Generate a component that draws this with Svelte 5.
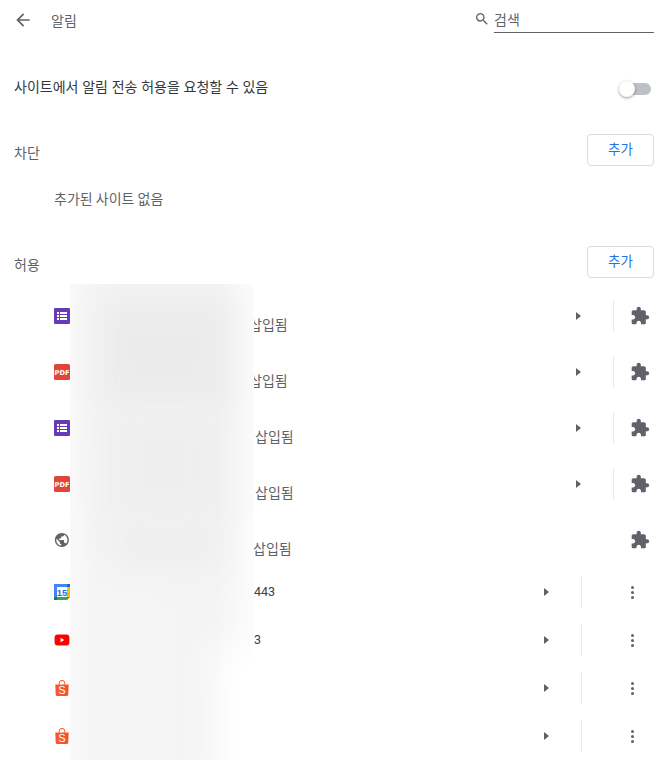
<script>
  const extRows = [
    { icon: 'forms', left: 249 },
    { icon: 'pdf', left: 249 },
    { icon: 'forms', left: 255 },
    { icon: 'pdf', left: 255 },
    { icon: 'globe', left: 253, plain: true },
  ];
  const siteRows = [
    { icon: 'calendar', text: '443' },
    { icon: 'youtube', text: '3' },
    { icon: 'shopee', text: '' },
    { icon: 'shopee', text: '' },
  ];
</script>

{#snippet favicon(name)}
  <svg class="favicon" viewBox="0 0 16 16" width="16" height="16">
    {#if name === 'forms'}
      <rect width="16" height="16" rx="1" fill="#673ab7" />
      <g fill="#fff">
        <rect x="3" y="4" width="2" height="2" /><rect x="6" y="4" width="7" height="2" />
        <rect x="3" y="7" width="2" height="2" /><rect x="6" y="7" width="7" height="2" />
        <rect x="3" y="10" width="2" height="2" /><rect x="6" y="10" width="7" height="2" />
      </g>
    {:else if name === 'pdf'}
      <rect width="16" height="16" rx="1.5" fill="#e2443a" />
      <text x="8" y="10.8" class="pdf">PDF</text>
    {:else if name === 'globe'}
      <g transform="translate(-0.5 -0.5) scale(0.7)">
        <path fill="#5f6368" d="M12 2C6.48 2 2 6.48 2 12s4.48 10 10 10 10-4.48 10-10S17.52 2 12 2zm-1 17.93c-3.95-.49-7-3.85-7-7.93 0-.62.08-1.21.21-1.79L9 15v1c0 1.1.9 2 2 2v1.93zm6.9-2.54c-.26-.81-1-1.39-1.9-1.39h-1v-3c0-.55-.45-1-1-1H8v-2h2c.55 0 1-.45 1-1V7h2c1.1 0 2-.9 2-2v-.41c2.93 1.19 5 4.06 5 7.41 0 2.08-.8 3.97-2.1 5.39z" />
      </g>
    {:else if name === 'calendar'}
      <rect width="16" height="16" fill="#fff" />
      <rect width="13" height="3" fill="#4285f4" />
      <rect width="3" height="13" fill="#4285f4" />
      <rect x="13" width="3" height="3" fill="#1967d2" />
      <rect x="13" y="3" width="3" height="10" fill="#fbbc04" />
      <rect y="13" width="13" height="3" fill="#34a853" />
      <rect y="13" width="3" height="3" fill="#188038" />
      <path d="M13 13h3l-3 3z" fill="#ea4335" />
      <text x="8" y="11.6" class="cal">15</text>
    {:else if name === 'youtube'}
      <rect x="0.6" y="2.4" width="14.8" height="11.2" rx="3" fill="#f00" />
      <path d="M6.5 5.8v4.4L10.3 8z" fill="#fff" />
    {:else if name === 'shopee'}
      <path d="M1.3 4.4h13.4l-.4 10.2q-.1 1.4-1.3 1.4H3q-1.2 0-1.3-1.4z" fill="#f5552d" />
      <path d="M5.2 4.5V3.2a2.8 2.8 0 0 1 5.6 0v1.3" fill="none" stroke="#f5552d" stroke-width="1" />
      <text x="8" y="14" class="bag">S</text>
    {/if}
  </svg>
{/snippet}

<div class="page">
  <header class="toolbar">
    <svg class="back" viewBox="0 0 24 24" width="20" height="20">
      <path d="M20 11H7.83l5.59-5.59L12 4l-8 8 8 8 1.41-1.41L7.83 13H20v-2z" />
    </svg>
    <h1>알림</h1>
    <svg class="search-icon" viewBox="0 0 24 24" width="16" height="16">
      <path d="M15.5 14h-.79l-.28-.27A6.471 6.471 0 0 0 16 9.5 6.5 6.5 0 1 0 9.5 16c1.61 0 3.09-.59 4.23-1.57l.27.28v.79l5 4.99L20.49 19l-4.99-5zm-6 0C7.01 14 5 11.99 5 9.5S7.01 5 9.5 5 14 7.01 14 9.5 11.99 14 9.5 14z" />
    </svg>
    <div class="search">검색</div>
  </header>

  <div class="ask">
    <span>사이트에서 알림 전송 허용을 요청할 수 있음</span>
    <div class="toggle"><div class="knob"></div></div>
  </div>

  <section class="block">
    <div class="section-head">
      <h2>차단</h2>
      <button>추가</button>
    </div>
    <p class="empty">추가된 사이트 없음</p>
  </section>

  <section class="allow">
    <div class="section-head">
      <h2>허용</h2>
      <button>추가</button>
    </div>

    <div class="list">
      {#each extRows as row}
        <div class="row ext">
          {@render favicon(row.icon)}
          <div class="name two-line" style="padding-left: {row.left - 70}px">삽입됨</div>
          {#if !row.plain}
            <span class="arrow"></span>
            <span class="sep"></span>
          {/if}
          <div class="action puzzle">
            <svg viewBox="0 0 24 24" width="20" height="20">
              <path d="M20.5 11H19V7c0-1.1-.9-2-2-2h-4V3.5C13 2.12 11.88 1 10.5 1S8 2.12 8 3.5V5H4c-1.1 0-1.99.9-1.99 2v3.8H3.5c1.49 0 2.7 1.21 2.7 2.7s-1.21 2.7-2.7 2.7H2V20c0 1.1.9 2 2 2h3.8v-1.5c0-1.49 1.21-2.7 2.7-2.7 1.49 0 2.7 1.21 2.7 2.7V22H17c1.1 0 2-.9 2-2v-4h1.5c1.38 0 2.5-1.12 2.5-2.5S21.88 11 20.5 11z" />
            </svg>
          </div>
        </div>
      {/each}

      {#each siteRows as row}
        <div class="row site">
          {@render favicon(row.icon)}
          <div class="name port">{row.text}</div>
          <span class="arrow"></span>
          <span class="sep"></span>
          <div class="action kebab"><i></i><i></i><i></i></div>
        </div>
      {/each}

      <div class="smudge">
        <div class="blob a"></div>
        <div class="blob b"></div>
        <div class="blob d"></div>
        <div class="blob c"></div>
      </div>
    </div>
  </section>
</div>

<style>
  :global(body) {
    background: #fff;
  }
  .page {
    font-family: "Noto Sans CJK KR", "Liberation Sans", sans-serif;
    font-size: 14px;
    color: #5f6368;
    height: 772px;
    overflow: hidden;
  }
  h1, h2, p {
    margin: 0;
    font-size: 14px;
    font-weight: 400;
  }
  .toolbar {
    display: flex;
    align-items: center;
    height: 40px;
    padding: 0 13px;
  }
  .back {
    fill: #5f6368;
  }
  h1 {
    margin-left: 18px;
    color: #5f6368;
  }
  .search-icon {
    margin-left: auto;
    margin-right: 4px;
    margin-top: -2px;
    fill: #5f6368;
  }
  .search {
    align-self: flex-start;
    width: 160px;
    box-sizing: border-box;
    height: 33px;
    line-height: 38px;
    border-bottom: 1px solid #5f6368;
    color: #5f6368;
  }
  .ask {
    display: flex;
    align-items: center;
    justify-content: space-between;
    margin-top: 32px;
    padding: 0 16px 0 14px;
    height: 28px;
    color: #33363a;
    word-spacing: 0.6px;
  }
  .toggle {
    position: relative;
    width: 31px;
    height: 12px;
    border-radius: 6px;
    background: #bdc1c6;
    margin-top: 5px;
  }
  .knob {
    position: absolute;
    left: -1px;
    top: -2px;
    width: 16px;
    height: 16px;
    border-radius: 50%;
    background: #fff;
    box-shadow: 0 1px 3px rgba(0, 0, 0, 0.4);
  }
  .block {
    margin-top: 34px;
  }
  .section-head {
    display: flex;
    justify-content: space-between;
    align-items: flex-start;
    padding: 0 13px 0 14px;
  }
  h2 {
    margin-top: 8px;
    line-height: 20px;
  }
  button {
    width: 67px;
    height: 32px;
    box-sizing: border-box;
    background: #fff;
    border: 1px solid #dadce0;
    border-radius: 4px;
    color: #1a73e8;
    font: inherit;
    font-size: 13.5px;
    line-height: 26px;
    padding: 0 0 4px;
  }
  .empty {
    margin-top: 22px;
    padding-left: 54px;
    line-height: 20px;
  }
  .allow {
    margin-top: 38px;
  }
  .list {
    position: relative;
    margin-top: 10px;
  }
  .row {
    display: flex;
    align-items: center;
    padding-left: 54px;
  }
  .row.ext {
    height: 56px;
  }
  .row.site {
    height: 48px;
  }
  .favicon {
    flex: none;
  }
  .pdf {
    font: 700 6.6px "DejaVu Sans", sans-serif;
    fill: #fff;
    text-anchor: middle;
  }
  .cal {
    font: 700 9.5px "Liberation Sans", sans-serif;
    fill: #1a73e8;
    text-anchor: middle;
  }
  .bag {
    font: 400 11px "Liberation Sans", sans-serif;
    fill: #fff;
    text-anchor: middle;
  }
  .name {
    flex: 1;
  }
  .two-line {
    padding-top: 16px;
    line-height: 20px;
  }
  .port {
    padding-left: 184px;
    padding-bottom: 1px;
    font-family: Roboto, "Liberation Sans", sans-serif;
    font-size: 12.5px;
    color: #3c4043;
  }
  .arrow {
    width: 0;
    height: 0;
    margin-right: 32px;
    border-left: 5px solid #5f6368;
    border-top: 4px solid transparent;
    border-bottom: 4px solid transparent;
  }
  .sep {
    width: 1px;
    height: 32px;
    background: #e8eaed;
  }
  .action {
    flex: none;
  }
  .puzzle {
    width: 53px;
    padding-right: 2px;
    box-sizing: border-box;
    display: flex;
    justify-content: center;
    margin-left: auto;
  }
  .puzzle svg {
    fill: #5f6368;
    margin-top: -1px;
  }
  .kebab {
    width: 85px;
    padding-left: 49px;
    box-sizing: border-box;
    display: flex;
    flex-direction: column;
    gap: 2px;
  }
  .kebab i {
    width: 3px;
    height: 3px;
    border-radius: 50%;
    background: #5f6368;
  }
  .smudge {
    position: absolute;
    left: 70px;
    top: -4px;
    width: 184px;
    height: 476px;
    overflow: hidden;
    background: linear-gradient(90deg, #f9f9f9 0, #f5f5f5 15%, #f4f4f4 80%, #fcfcfc 100%);
  }
  .blob {
    position: absolute;
    filter: blur(16px);
  }
  .a {
    left: 30px;
    top: 12px;
    width: 130px;
    height: 110px;
    background: #ebebeb;
  }
  .b {
    left: 35px;
    top: 130px;
    width: 120px;
    height: 100px;
    background: #eeeeee;
  }
  .d {
    left: 40px;
    top: 240px;
    width: 110px;
    height: 40px;
    background: #ededed;
  }
  .c {
    left: 145px;
    top: 360px;
    width: 80px;
    height: 160px;
    background: #fff;
    filter: blur(20px);
  }
</style>
